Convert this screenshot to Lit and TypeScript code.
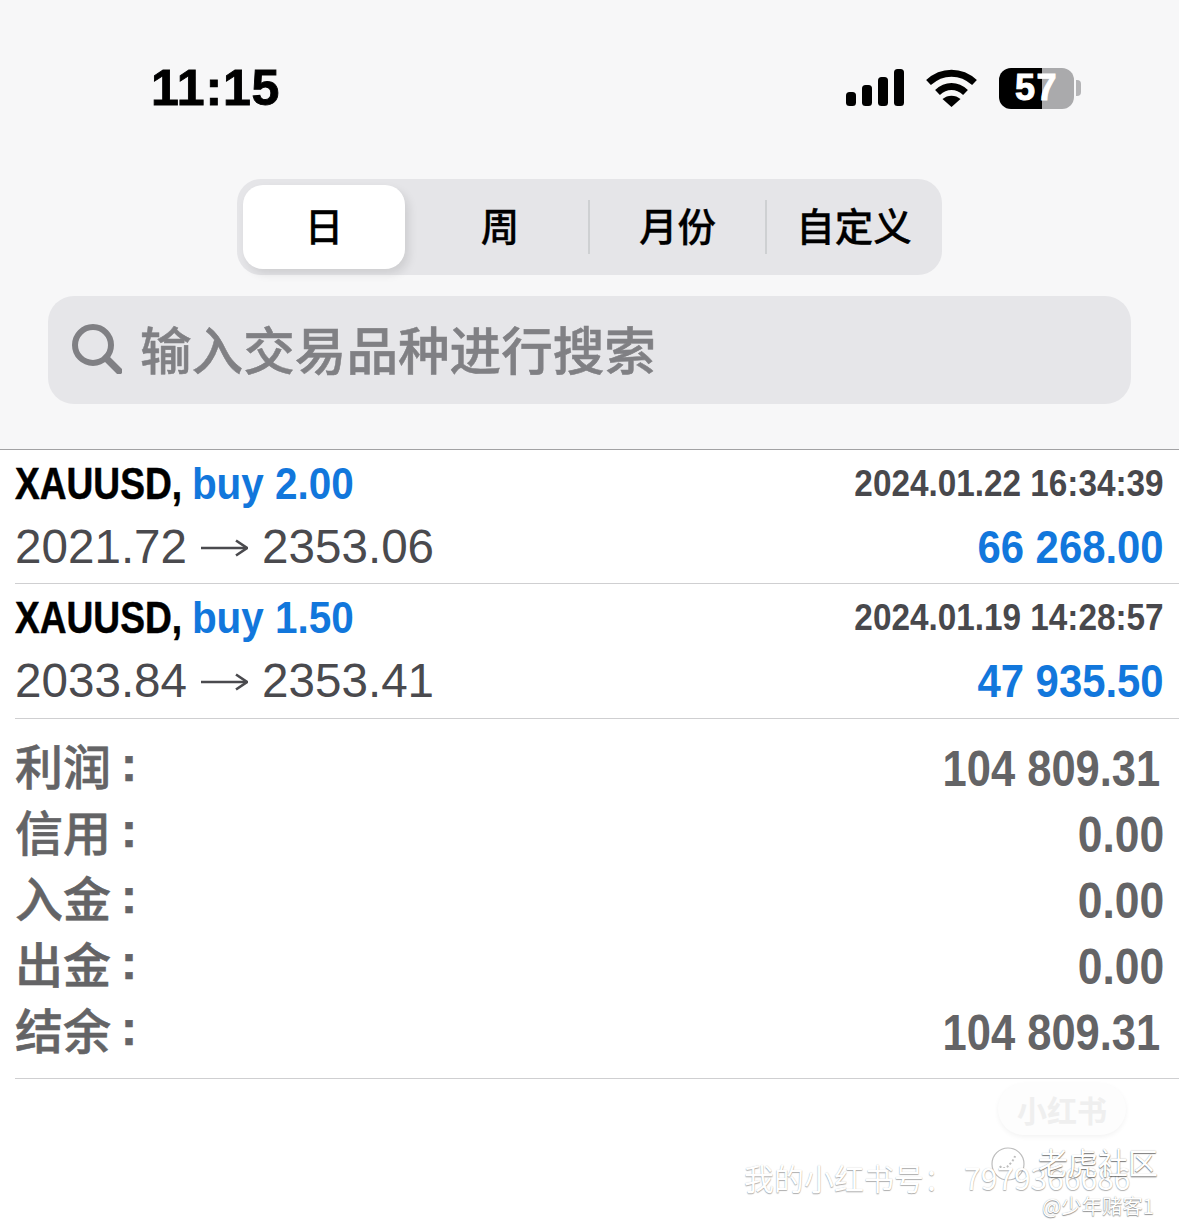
import { LitElement, html, css } from "lit";
import { customElement } from "lit/decorators.js";

@customElement("app-root")
export class AppRoot extends LitElement {
  static styles = css`
    :host { display: block; width: 1179px; height: 1230px; position: relative; overflow: hidden; background: #fff; font-family: "Liberation Sans", "Noto Sans CJK SC", sans-serif; }
    .head { box-sizing: border-box; background: #f7f7f8; border-bottom: 1px solid #a2a2a4; padding-top: 60px; height: 450px; }
    .status { height: 56px; display: flex; align-items: center; padding: 0 98px 0 151px; }
    .time { font-size: 50px; font-weight: 700; color: #000; letter-spacing: .8px; -webkit-text-stroke: .9px #000; line-height: 56px; flex: 1; }
    .signal { display: block; margin-right: 22px; }
    .wifi { display: block; margin-right: 22px; }
    .battery { display: flex; align-items: center; gap: 2px; }
    .batt { width: 75px; height: 41px; border-radius: 12px; overflow: hidden; background: linear-gradient(90deg, #000 0 57%, #aaaaac 57% 100%); color: #fff; font-size: 36px; font-weight: 700; -webkit-text-stroke: 1px #fff; display: flex; align-items: center; justify-content: center; letter-spacing: 1.5px; }
    .tip { width: 5px; height: 16px; background: #b4b4b6; border-radius: 0 4px 4px 0; }
    .segs { margin: 63px 0 0 237px; width: 705px; height: 96px; box-sizing: border-box; background: #e5e5e8; border-radius: 24px; padding: 6px 0 6px 6px; display: grid; grid-template-columns: 168px 178px 177px 1fr; align-items: center; }
    .seg { font-family: "Noto Sans CJK SC", sans-serif; font-size: 38.5px; font-weight: 500; color: #000; -webkit-text-stroke: .3px #000; height: 84px; line-height: 78px; text-align: center; box-sizing: border-box; }
    .seg.on { width: 162px; background: #fff; border-radius: 20px; box-shadow: 4px 5px 10px rgba(0,0,0,.1); }
    .seg.div { position: relative; }
    .seg.div::after { content: ""; position: absolute; right: -1px; top: 15px; height: 54px; width: 2px; background: #ced0d2; }
    .search { margin: 21px 48px 0; height: 108px; background: #e6e6e9; border-radius: 26px; display: flex; align-items: center; padding-left: 24px; gap: 18px; color: #808084; }
    .search span { font-family: "Noto Sans CJK SC", sans-serif; font-size: 51.6px; font-weight: 500; -webkit-text-stroke: .5px #808084; line-height: 70px; margin-bottom: 4px; }
    .search svg { margin-bottom: 2px; }
    .trade { height: 133px; margin-left: 15px; border-bottom: 1px solid #cfcfd1; padding-right: 15px; display: grid; grid-template-rows: 68px 58px; }
    .trade.t2 { height: 134px; }
    .line { display: flex; justify-content: space-between; align-items: center; }
    .name { font-size: 44px; font-weight: 700; color: #000; display: inline-block; transform: scaleX(.92); transform-origin: left center; white-space: nowrap; line-height: 68px; }
    .sym { display: inline-block; transform: scaleX(.917); transform-origin: left center; margin-right: -18px; -webkit-text-stroke: .5px #000; }
    .blue { color: #1277dc; }
    .date { font-size: 37px; font-weight: 700; color: #48484c; display: inline-block; transform: scaleX(.9); transform-origin: right center; white-space: nowrap; }
    .price { font-size: 47.6px; color: #4a4a4e; white-space: nowrap; line-height: 58px; display: flex; align-items: center; gap: 14px; }
    .arr { display: block; margin-top: 2px; }
    .profit { font-size: 46px; font-weight: 700; color: #1277dc; display: inline-block; transform: scaleX(.91); transform-origin: right center; white-space: nowrap; }
    .summary { margin-left: 15px; padding: 17px 15px 13px 0; border-bottom: 1px solid #cfcfd1; height: 360px; box-sizing: border-box; }
    .sum { height: 66px; display: flex; justify-content: space-between; align-items: center; color: #646466; }
    .lab { font-family: "Noto Sans CJK SC", sans-serif; font-size: 48px; font-weight: 500; -webkit-text-stroke: .6px #646466; line-height: 56px; display: flex; align-items: center; margin-bottom: 10px; }
    .colon { font-family: "Liberation Sans", sans-serif; font-weight: 700; margin-left: 10px; font-size: 48px; margin-bottom: -2px; }
    .val { font-size: 50px; font-weight: 700; display: inline-block; transform: scaleX(.89); transform-origin: right center; white-space: nowrap; }
    .val.in { margin-right: 4px; transform: scaleX(.87); }
    .wm { position: absolute; white-space: nowrap; color: #fff; font-family: "Noto Sans CJK SC", sans-serif; text-shadow: 0 1px 1px rgba(0,0,0,.3), 0 0 1px rgba(0,0,0,.2); }
    .w1 { left: 744px; top: 1156px; font-size: 30px; line-height: 42px; }
    .w1 b { font-weight: 400; margin-left: 10px; }
    .w2 { left: 1038px; top: 1140px; font-size: 30px; line-height: 42px; text-shadow: 0 1px 1px rgba(0,0,0,.5), 0 0 1px rgba(0,0,0,.3); }
    .w3 { left: 1042px; top: 1190px; font-size: 20.4px; line-height: 30px; text-shadow: 0 1px 1px rgba(0,0,0,.4), 0 0 1px rgba(0,0,0,.3); }
    .pill { position: absolute; left: 998px; top: 1083px; width: 128px; height: 52px; border-radius: 26px; background: #fdfdfd; box-shadow: 0 2px 5px rgba(0,0,0,.05); display: flex; align-items: center; justify-content: center; color: #efefef; font-family: "Noto Sans CJK SC", sans-serif; font-weight: 700; font-size: 30px; }
    .logo { position: absolute; left: 990px; top: 1146px; }
  `;

  render() {
    const sums: [string, string, boolean][] = [
      ["利润", "104 809.31", true], ["信用", "0.00", false], ["入金", "0.00", false], ["出金", "0.00", false], ["结余", "104 809.31", true],
    ];
    const trades = [
      ["buy 2.00", "2024.01.22 16:34:39", "2021.72", "2353.06", "66 268.00"],
      ["buy 1.50", "2024.01.19 14:28:57", "2033.84", "2353.41", "47 935.50"],
    ];
    const arrow = html`<svg class="arr" width="47" height="20" viewBox="0 0 47 20" fill="none" stroke="#4a4a4e" stroke-width="2.6"><path d="M0 10H45"/><path d="M35 2.5L46 10L35 17.5"/></svg>`;
    return html`
      <div class="head">
        <div class="status">
          <div class="time">11:15</div>
          <svg class="signal" width="58" height="38" viewBox="0 0 58 38" fill="#000">
            <rect x="0" y="23" width="10" height="14" rx="3.5"/><rect x="16" y="16" width="10" height="21" rx="3.5"/>
            <rect x="32" y="8" width="10" height="29" rx="3.5"/><rect x="48" y="0" width="10" height="37" rx="3.5"/>
          </svg>
          <svg class="wifi" width="51" height="38" viewBox="0 0 51 38" fill="none" stroke="#000" stroke-width="7">
            <path d="M2.5 13.5C16 1 35 1 48.5 13.5"/><path d="M11.5 23.5C20 15.5 31 15.5 39.5 23.5"/>
            <path d="M25.5 38L16.5 30C21.5 25.5 29.5 25.5 34.5 30Z" fill="#000" stroke="none"/>
          </svg>
          <div class="battery"><div class="batt">57</div><div class="tip"></div></div>
        </div>
        <div class="segs">
          <div class="seg on">日</div><div class="seg div">周</div><div class="seg div">月份</div><div class="seg">自定义</div>
        </div>
        <div class="search">
          <svg width="50" height="50" viewBox="0 0 50 50" fill="none" stroke="#808084" stroke-width="6" stroke-linecap="round"><circle cx="21" cy="21" r="18"/><path d="M34 34L47 47" stroke-width="7"/></svg>
          <span>输入交易品种进行搜索</span>
        </div>
      </div>
      ${trades.map((t, i) => html`
        <div class="trade ${i ? "t2" : ""}">
          <div class="line"><span class="name"><span class="sym">XAUUSD,</span> <span class="blue">${t[0]}</span></span><span class="date">${t[1]}</span></div>
          <div class="line"><span class="price">${t[2]} ${arrow} ${t[3]}</span><span class="profit">${t[4]}</span></div>
        </div>`)}
      <div class="summary">
        ${sums.map(s => html`<div class="sum"><span class="lab">${s[0]}<span class="colon">:</span></span><span class="val ${s[2] ? "in" : ""}">${s[1]}</span></div>`)}
      </div>
      <div class="pill">小红书</div>
      <svg class="logo" width="36" height="36" viewBox="0 0 36 36" fill="none" stroke="#bdbdbd" stroke-width="1.2"><circle cx="18" cy="18" r="16"/><path d="M10 20c2 4 6 2 8 0s6-6 7-10" stroke-width="2" stroke-dasharray="2 2"/></svg>
      <div class="wm w1">我的小红书号：<b>7979366686</b></div>
      <div class="wm w2">老虎社区</div>
      <div class="wm w3">@少年赌客1</div>
    `;
  }
}
